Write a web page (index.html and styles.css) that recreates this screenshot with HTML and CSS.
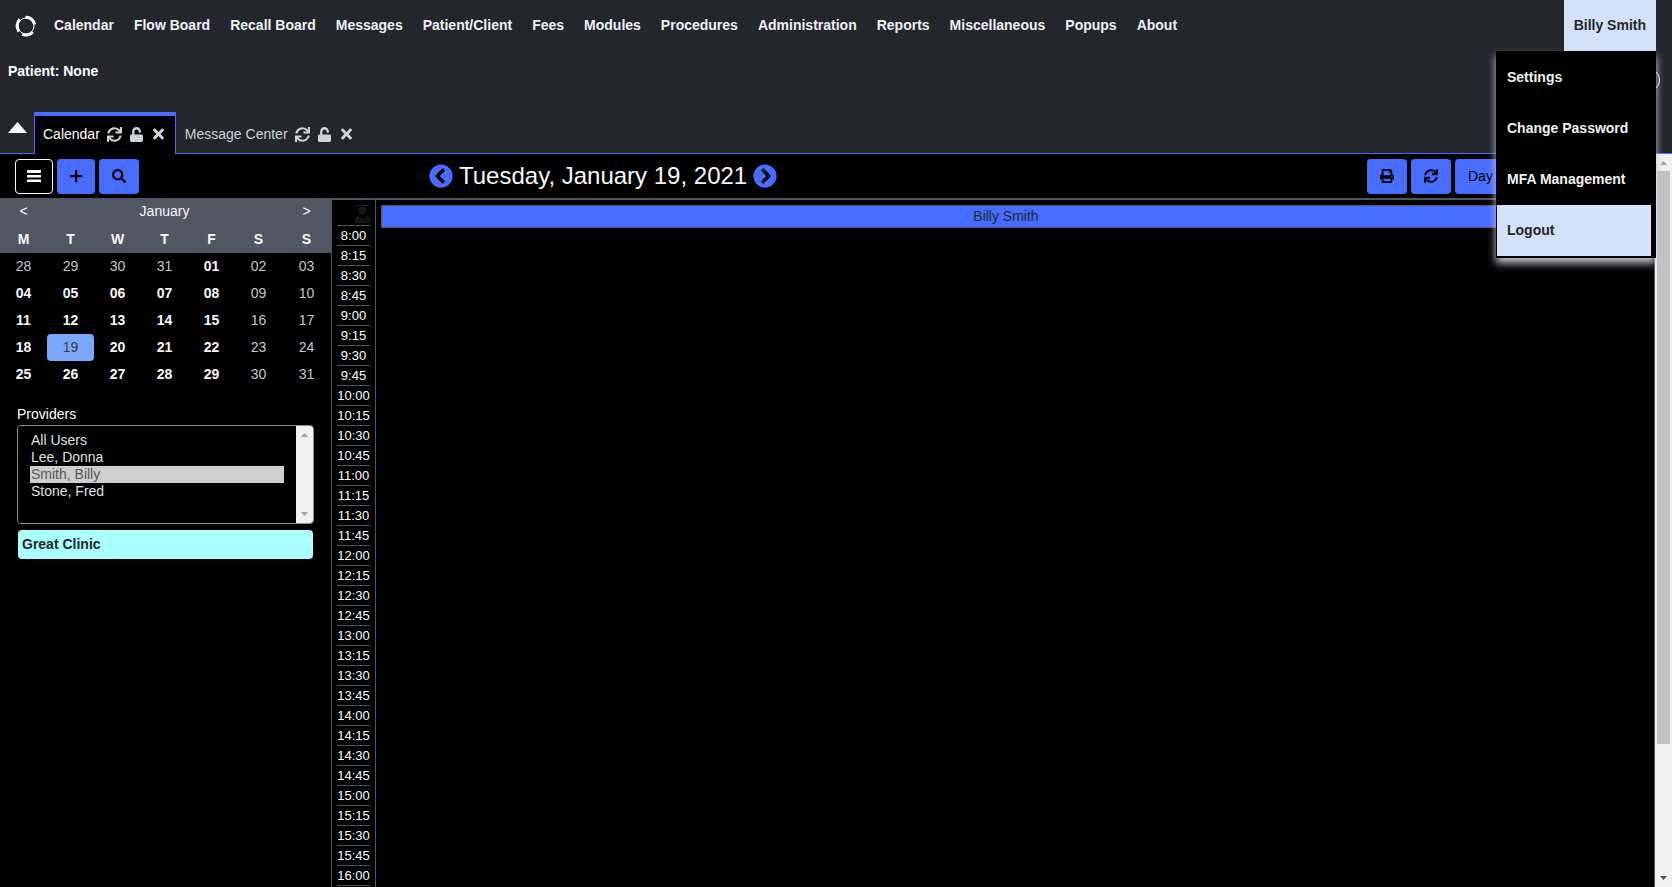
FILE: index.html
```html
<!DOCTYPE html>
<html lang="en">
<head>
<meta charset="utf-8">
<title>Calendar</title>
<link rel="stylesheet" href="styles.css">
</head>
<body>
<svg class="defs" aria-hidden="true">
  <symbol id="sync" viewBox="0 0 512 512"><path d="M440.65 12.57l4 82.77A247.16 247.16 0 0 0 255.83 8C134.73 8 33.91 94.92 12.29 209.82A12 12 0 0 0 24.09 224h49.05a12 12 0 0 0 11.67-9.26 175.91 175.91 0 0 1 317-56.94l-101.46-4.86a12 12 0 0 0-12.57 12v47.41a12 12 0 0 0 12 12H500a12 12 0 0 0 12-12V12a12 12 0 0 0-12-12h-47.37a12 12 0 0 0-11.98 12.57zM255.83 432a175.61 175.61 0 0 1-146-77.8l101.8 4.87a12 12 0 0 0 12.57-12v-47.4a12 12 0 0 0-12-12H12a12 12 0 0 0-12 12V500a12 12 0 0 0 12 12h47.35a12 12 0 0 0 12-12.6l-4.15-82.57A247.17 247.17 0 0 0 255.83 504c121.11 0 221.93-86.92 243.55-201.82a12 12 0 0 0-11.8-14.18h-49.05a12 12 0 0 0-11.67 9.26A175.86 175.86 0 0 1 255.83 432z"/></symbol>
  <symbol id="unlock" viewBox="0 0 448 512"><path d="M400 256H152V152.9c0-39.6 31.7-72.5 71.3-72.9 40-.4 72.7 32.1 72.7 72v16c0 13.3 10.7 24 24 24h32c13.3 0 24-10.7 24-24v-16C376 68 307.5-.3 223.5 0 139.5.3 72 69.5 72 153.5V256H48c-26.5 0-48 21.5-48 48v160c0 26.5 21.5 48 48 48h352c26.5 0 48-21.5 48-48V304c0-26.5-21.5-48-48-48z"/></symbol>
  <symbol id="times" viewBox="0 0 352 512"><path d="M242.72 256l100.07-100.07c12.28-12.28 12.28-32.19 0-44.48l-22.24-22.24c-12.28-12.28-32.19-12.28-44.48 0L176 189.28 75.93 89.21c-12.28-12.28-32.19-12.28-44.48 0L9.21 111.45c-12.28 12.28-12.28 32.19 0 44.48L109.28 256 9.21 356.07c-12.28 12.28-12.28 32.19 0 44.48l22.24 22.24c12.28 12.28 32.2 12.28 44.48 0L176 322.72l100.07 100.07c12.28 12.28 32.2 12.28 44.48 0l22.24-22.24c12.28-12.28 12.28-32.19 0-44.48L242.72 256z"/></symbol>
  <symbol id="search" viewBox="0 0 512 512"><path d="M505 442.7L405.3 343c-4.5-4.5-10.6-7-17-7H372c27.6-35.3 44-79.7 44-128C416 93.1 322.9 0 208 0S0 93.1 0 208s93.1 208 208 208c48.3 0 92.7-16.4 128-44v16.3c0 6.4 2.5 12.5 7 17l99.7 99.7c9.4 9.4 24.6 9.4 33.9 0l28.3-28.3c9.4-9.4 9.4-24.6.1-34zM208 336c-70.7 0-128-57.2-128-128 0-70.7 57.2-128 128-128 70.7 0 128 57.2 128 128 0 70.7-57.2 128-128 128z"/></symbol>
  <symbol id="chevron" viewBox="0 0 512 512"><path d="M256 504C119 504 8 393 8 256S119 8 256 8s248 111 248 248-111 248-248 248zM142.1 273l135.5 135.5c9.4 9.4 24.6 9.4 33.9 0l17-17c9.4-9.4 9.4-24.6 0-33.9L226.9 256l101.6-101.6c9.4-9.4 9.4-24.6 0-33.9l-17-17c-9.4-9.4-24.6-9.4-33.9 0L142.1 239c-9.4 9.4-9.4 24.6 0 34z"/></symbol>
  <symbol id="print" viewBox="0 0 512 512"><path d="M448 192V77.25c0-8.49-3.37-16.62-9.37-22.63L393.37 9.37c-6-6-14.14-9.37-22.63-9.37H96C78.33 0 64 14.33 64 32v160c-35.35 0-64 28.65-64 64v112c0 8.84 7.16 16 16 16h48v96c0 17.67 14.33 32 32 32h320c17.67 0 32-14.33 32-32v-96h48c8.84 0 16-7.16 16-16V256c0-35.35-28.65-64-64-64zm-64 256H128v-96h256v96zm0-224H128V64h192v48c0 8.84 7.16 16 16 16h48v96zm48 72c-13.25 0-24-10.75-24-24 0-13.26 10.75-24 24-24s24 10.74 24 24c0 13.25-10.75 24-24 24z"/></symbol>
  <symbol id="bars" viewBox="0 0 14 14"><path d="M0 1h14v3H0zM0 6h14v2.500H0zM0 10.500h14v2.500H0z"/></symbol>
  <symbol id="plus" viewBox="0 0 14 14"><path d="M6 1h2.300v5h5v2.300h-5v5H6v-5H1V6h5z"/></symbol>
  <symbol id="arrow" viewBox="0 0 7 4"><path d="M0 4 3.500 0 7 4z"/></symbol>
</svg>

<header class="top">
  <nav class="nav">
    <a class="logo" href="#" aria-label="Home">
      <svg width="22" height="22" viewBox="0 0 22 22">
        <circle cx="11" cy="11" r="8"/>
        <path d="M10.500 2.300A9 9 0 0 1 18.500 6.500L19.700 9.500M4.900 4.400A9 9 0 0 0 4 16.500M17.800 17A9 9 0 0 1 7.200 19.200"/>
      </svg>
    </a>
    <a href="#">Calendar</a><a href="#">Flow Board</a><a href="#">Recall Board</a><a href="#">Messages</a><a href="#">Patient/Client</a><a href="#">Fees</a><a href="#">Modules</a><a href="#">Procedures</a><a href="#">Administration</a><a href="#">Reports</a><a href="#">Miscellaneous</a><a href="#">Popups</a><a href="#">About</a>
    <div class="user">
      <button class="user-button" aria-expanded="true">Billy Smith</button>
      <div class="menu">
        <a href="#">Settings</a>
        <a href="#">Change Password</a>
        <a href="#">MFA Management</a>
        <a class="hover" href="#">Logout</a>
      </div>
    </div>
  </nav>
  <div class="patient">
    <strong>Patient: None</strong>
    <span class="ring"></span>
  </div>
  <div class="tabs">
    <button class="collapse" aria-label="Collapse header"><svg width="19" height="11" viewBox="0 0 19 11"><path d="M0 11 9.500 0 19 11z"/></svg></button>
    <div class="tab active">
      <span>Calendar</span>
      <button aria-label="Refresh"><svg width="15" height="15"><use href="#sync"/></svg></button>
      <button aria-label="Unlock"><svg width="13" height="15"><use href="#unlock"/></svg></button>
      <button aria-label="Close"><svg width="11" height="16"><use href="#times"/></svg></button>
    </div>
    <div class="tab">
      <span>Message Center</span>
      <button aria-label="Refresh"><svg width="15" height="15"><use href="#sync"/></svg></button>
      <button aria-label="Unlock"><svg width="13" height="15"><use href="#unlock"/></svg></button>
      <button aria-label="Close"><svg width="11" height="16"><use href="#times"/></svg></button>
    </div>
  </div>
</header>

<div class="page">
  <div class="content">
    <div class="toolbar">
      <button class="btn outline" aria-label="Toggle sidebar"><svg width="14" height="14"><use href="#bars"/></svg></button>
      <button class="btn" aria-label="Add"><svg width="14" height="14"><use href="#plus"/></svg></button>
      <button class="btn wide" aria-label="Search"><svg width="14" height="14"><use href="#search"/></svg></button>
      <div class="date">
        <button aria-label="Previous day"><svg width="24" height="24"><use href="#chevron"/></svg></button>
        <h1>Tuesday, January 19, 2021</h1>
        <button aria-label="Next day"><svg class="flip" width="24" height="24"><use href="#chevron"/></svg></button>
      </div>
      <button class="btn wide" aria-label="Print"><svg width="14" height="14"><use href="#print"/></svg></button>
      <button class="btn wide" aria-label="Refresh"><svg width="14" height="14"><use href="#sync"/></svg></button>
      <select class="view" aria-label="View"><option>Day</option><option>Week</option><option>Month</option></select>
    </div>

    <div class="body">
      <aside class="side">
        <table class="month">
          <colgroup><col span="6" class="day"><col></colgroup>
          <thead>
            <tr><th><button aria-label="Previous month">&lt;</button></th><th colspan="5">January</th><th><button aria-label="Next month">&gt;</button></th></tr>
            <tr class="dow"><th>M</th><th>T</th><th>W</th><th>T</th><th>F</th><th>S</th><th>S</th></tr>
          </thead>
          <tbody>
            <tr><td class="off">28</td><td class="off">29</td><td class="off">30</td><td class="off">31</td><td>01</td><td class="off">02</td><td class="off">03</td></tr>
            <tr><td>04</td><td>05</td><td>06</td><td>07</td><td>08</td><td class="off">09</td><td class="off">10</td></tr>
            <tr><td>11</td><td>12</td><td>13</td><td>14</td><td>15</td><td class="off">16</td><td class="off">17</td></tr>
            <tr><td>18</td><td class="today">19</td><td>20</td><td>21</td><td>22</td><td class="off">23</td><td class="off">24</td></tr>
            <tr><td>25</td><td>26</td><td>27</td><td>28</td><td>29</td><td class="off">30</td><td class="off">31</td></tr>
          </tbody>
        </table>
        <div class="providers">
          <label for="providers">Providers</label>
          <div class="listbox">
            <select id="providers" size="5">
              <option>All Users</option>
              <option>Lee, Donna</option>
              <option selected>Smith, Billy</option>
              <option>Stone, Fred</option>
            </select>
            <div class="mini-scroll"><svg width="7" height="4"><use href="#arrow"/></svg><svg class="down" width="7" height="4"><use href="#arrow"/></svg></div>
          </div>
          <div class="clinic">Great Clinic</div>
        </div>
      </aside>

      <div class="times">
        <div class="staff">
          <svg width="15" height="18" viewBox="0 0 15 17"><circle cx="7.500" cy="4.500" r="4"/><path d="M4 10 7.500 13 11 10Q15 11 15 14V15.500Q15 17 13.500 17H1.500Q0 17 0 15.500V14Q0 11 4 10z"/><path class="cut" d="M4.500 10.500v3M10.500 10.500v2M9 15.500v-1.500q1.500-2 3 0v1.500M3 15h2"/></svg>
        </div>
        <ol>
          <li>8:00</li><li>8:15</li><li>8:30</li><li>8:45</li><li>9:00</li><li>9:15</li><li>9:30</li><li>9:45</li><li>10:00</li><li>10:15</li><li>10:30</li><li>10:45</li><li>11:00</li><li>11:15</li><li>11:30</li><li>11:45</li><li>12:00</li><li>12:15</li><li>12:30</li><li>12:45</li><li>13:00</li><li>13:15</li><li>13:30</li><li>13:45</li><li>14:00</li><li>14:15</li><li>14:30</li><li>14:45</li><li>15:00</li><li>15:15</li><li>15:30</li><li>15:45</li><li>16:00</li>
        </ol>
      </div>
      <main class="schedule"><div class="provider">Billy Smith</div></main>
    </div>
  </div>
  <div class="scroll">
    <svg width="7" height="4"><use href="#arrow"/></svg>
    <div class="track"><div class="thumb"></div></div>
    <svg class="down dark" width="7" height="4"><use href="#arrow"/></svg>
  </div>
</div>
</body>
</html>
```
FILE: styles.css
```css
* { box-sizing: border-box; }

body {
  margin: 0;
  height: 100vh;
  display: flex;
  flex-direction: column;
  overflow: hidden;
  background: #000;
  color: #f8f9fa;
  font: 14px/20px "Liberation Sans", Arial, sans-serif;
}

button, select { font: inherit; color: inherit; }
button { padding: 0; border: 0; background: none; }
a { color: inherit; text-decoration: none; }
svg { display: block; fill: currentColor; }
.defs { position: absolute; width: 0; height: 0; }

/* Header */
.top { flex: none; background: #23262b; }
.nav { display: flex; height: 51px; padding-right: 16px; font-weight: bold; line-height: 50px; color: #f0f1f3; }
.nav > a { padding: 0 10px; }
.nav > .logo { display: flex; align-items: center; padding: 0 7px 0 15px; }
.logo svg { fill: none; stroke: #fff; stroke-width: 3; }
.logo circle { stroke-width: 1; }
.user { position: relative; margin-left: auto; }
.user-button { display: block; height: 51px; padding: 0 10px 2px; background: #d3e2f9; color: #23262b; font-weight: bold; }
.menu {
  position: absolute;
  z-index: 2;
  top: 51px;
  right: 0;
  width: 160px;
  padding: 1px 5px 2px 1px;
  background: #000;
  box-shadow: 0 5px 8px 0 #cdc8d6;
}
.menu a { display: block; height: 51px; padding: 0 10px; }
.menu .hover { background: #d3e2f9; color: #23262b; }

.patient { display: flex; justify-content: space-between; height: 61px; padding: 10px 12px 0 8px; color: #fff; }
.ring { width: 24px; height: 24px; margin-top: 7px; border: 1px solid #fff; border-radius: 50%; }

.tabs { display: flex; height: 42px; padding-left: 8px; border-bottom: 1px solid #466dff; }
.collapse { width: 19px; margin-right: 7px; padding-bottom: 10px; color: #fff; }
.tab { display: flex; align-items: center; height: 42px; padding: 2px 10px 0 9px; color: #ced4da; }
.tab.active { border: 1px solid #466dff; border-width: 4px 1px 0; padding: 0 11px 2px 8px; background: #000; color: #fff; }
.tab button { margin-left: 8px; color: #ced4da; }
.tab button:first-of-type { margin-left: 7px; }
.tab button:last-child { margin-left: 10px; }

/* Page */
.page { flex: 1; display: flex; min-height: 0; }
.content { flex: 1; display: flex; flex-direction: column; min-width: 0; border-right: 1px solid #505662; }
.toolbar { flex: none; display: flex; align-items: center; gap: 4px; height: 44px; padding: 0 14px 0 15px; }
.btn { display: flex; align-items: center; justify-content: center; width: 38px; height: 35px; border-radius: 4px; background: #466dff; color: #000; }
.btn.wide { width: 40px; }
.btn.outline { border: 1px solid #f8f9fa; background: #000; color: #f8f9fa; }
.date { display: flex; align-items: center; gap: 6px; margin: 0 auto 0 286px; }
.date button { color: #466dff; }
.date h1 { margin: 0; font-size: 24px; line-height: 30px; font-weight: normal; white-space: nowrap; }
.flip { transform: scaleX(-1); }
.view { width: 185px; height: 35px; padding: 0 13px; appearance: none; border: 0; border-radius: 4px; background: #466dff; color: #000; }

.body { flex: 1; display: flex; min-height: 0; overflow: hidden; }

/* Sidebar */
.side { flex: none; width: 331px; }
.month { width: 100%; border-collapse: collapse; table-layout: fixed; text-align: center; line-height: 27px; }
.month .day { width: 47px; }
.month th, .month td { height: 27px; padding: 0; font-weight: bold; }
.month th { background: #505662; font-weight: normal; }
.month .dow th { height: 28px; font-weight: bold; }
.month .off { color: #c3c6ca; font-weight: normal; }
.month .today { border-radius: 4px; background: #7ba8ff; color: #343c4c; font-weight: normal; }
.providers { padding: 16px 17px; }
.providers label { display: block; height: 21px; color: #fff; }
.listbox { display: flex; height: 99px; border: 1px solid #8a8f98; border-radius: 4px; overflow: hidden; }
.listbox select { flex: 1; height: 97px; padding: 6px 12px; border: 0; outline: 0; background: #000; overflow: hidden; }
.listbox option { min-height: 17px; padding: 0 1px 1px; color: #dee2e6; }
.listbox option:checked { background: linear-gradient(#cecece, #cecece); color: #555; }
.mini-scroll { display: flex; flex-direction: column; justify-content: space-between; align-items: center; width: 17px; padding: 7px 0; background: #f1f1f1; color: #a3a3a3; }
.down { transform: scaleY(-1); }
.clinic { height: 29px; margin: 6px 1px 0; padding-left: 4px; border-radius: 4px; background: #aaffff; color: #23262b; font-weight: bold; line-height: 28px; }

/* Time column and schedule */
.times { flex: none; width: 45px; padding: 5px 5px 0; border: 1px solid #505662; border-width: 2px 1px 0; }
.staff { display: flex; justify-content: flex-end; height: 20px; color: #16181b; }
.staff svg { border-top: 1px solid #23262b; }
.cut { fill: none; stroke: #000; }
.times ol { margin: 0; padding: 0; list-style: none; text-align: center; }
.times li { height: 20px; border-top: 1px solid #505662; font-size: 13px; line-height: 19px; color: #fff; }
.times li:last-child { height: 21px; border-bottom: 1px solid #505662; }
.schedule { flex: 1; min-width: 0; padding: 5px 23px 0 5px; border-top: 2px solid #505662; }
.provider { height: 23px; border: 1px solid #505662; background: #466dff; color: #23262b; line-height: 20px; text-align: center; }

/* Scrollbar */
.scroll { flex: none; display: flex; flex-direction: column; align-items: center; width: 17px; padding: 7px 0; background: #f1f1f1; color: #a3a3a3; }
.scroll svg { flex: none; }
.track { flex: 1; width: 13px; margin: 6px 0; }
.thumb { height: 82%; background: #c1c1c1; }
.dark { color: #505050; }
```
